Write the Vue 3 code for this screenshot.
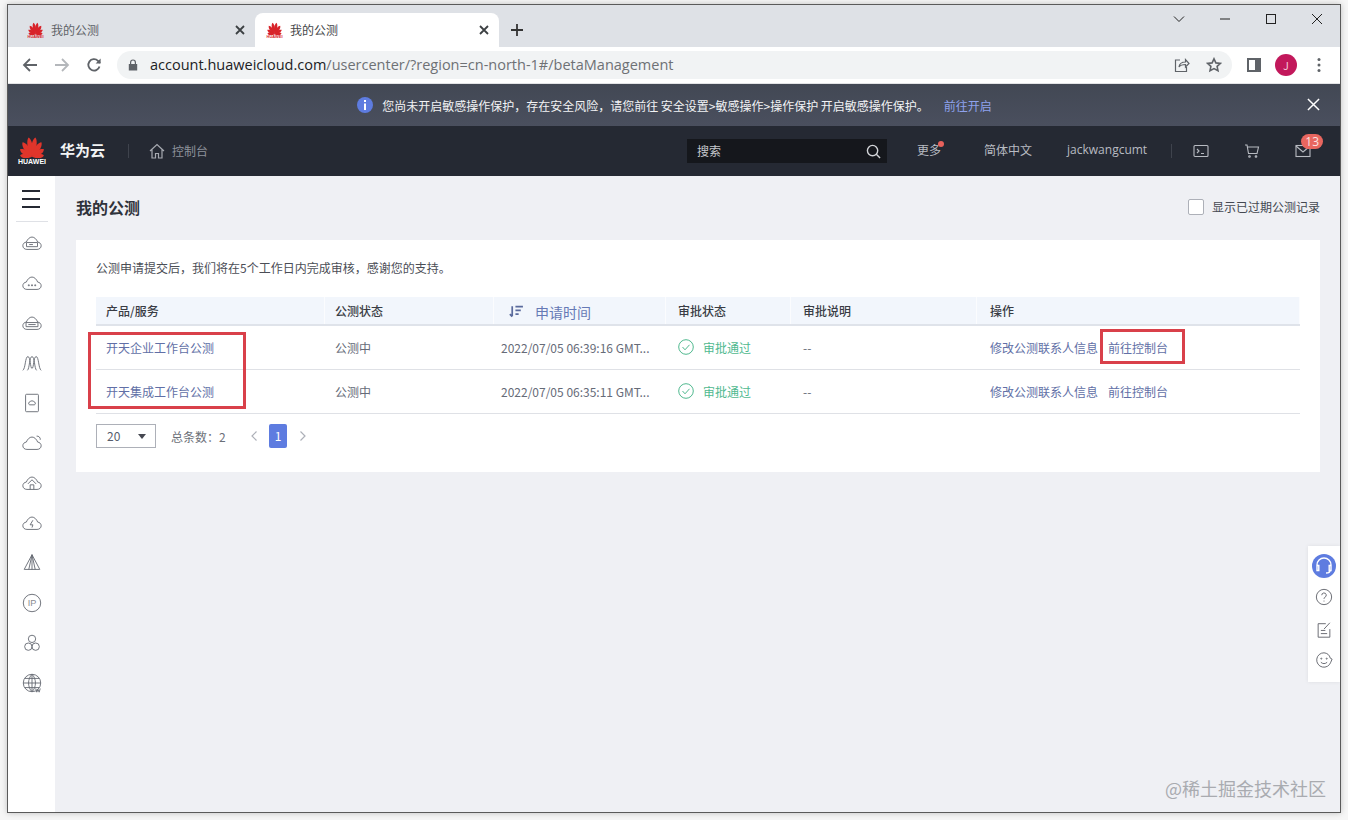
<template>
  <div class="window">
    <svg class="defs" width="0" height="0">
      <symbol id="flower" viewBox="0 0 24 20">
        <path
          v-for="p in petals"
          :key="p.a"
          :transform="`rotate(${p.a} 12 19)`"
          :d="`M12 19C${12 - p.w} ${19 - p.l * 0.55} ${12 - p.w * 0.5} ${19 - p.l * 0.9} 12 ${19 - p.l}C${12 + p.w * 0.5} ${19 - p.l * 0.9} ${12 + p.w} ${19 - p.l * 0.55} 12 19Z`"
          fill="currentColor"
        />
      </symbol>
    </svg>

    <div class="tabstrip">
      <div v-for="tab in tabs" :key="tab" class="tab" :class="tab">
        <div class="favicon">
          <svg><use href="#flower" /></svg>
          <span>HUAWEI</span>
        </div>
        <span class="tab-title">我的公测</span>
        <svg class="tab-x" viewBox="0 0 12 12"><path d="M2 2l8 8M10 2l-8 8" /></svg>
      </div>
      <svg class="new-tab" viewBox="0 0 14 14"><path d="M7 1v12M1 7h12" /></svg>
      <div class="win-ctrls">
        <svg viewBox="0 0 12 12"><path d="M1 3.500l5 5 5-5" /></svg>
        <svg viewBox="0 0 12 12"><path d="M1 6h10" /></svg>
        <svg viewBox="0 0 12 12"><rect x="1.500" y="1.500" width="9" height="9" /></svg>
        <svg viewBox="0 0 12 12"><path d="M1 1l10 10M11 1L1 11" /></svg>
      </div>
    </div>

    <div class="toolbar">
      <svg class="nav" viewBox="0 0 16 16"><path d="M15 8H2M8 2L2 8l6 6" /></svg>
      <svg class="nav dim" viewBox="0 0 16 16"><path d="M1 8h13M8 2l6 6-6 6" /></svg>
      <svg class="nav" viewBox="0 0 16 16"><path d="M13.500 9.500A5.700 5.700 0 1 1 12 3.800L14 6" /><path class="solid" d="M14.600 1.600v5h-5z" /></svg>
      <div class="omnibox">
        <svg class="lock" viewBox="0 0 10 12"><path d="M2 5V3.400a3 3 0 0 1 6 0V5h1.200v6.500H.8V5zm1.200 0h3.600V3.400a1.800 1.800 0 0 0-3.600 0z" /></svg>
        <span class="url"><b>account.huaweicloud.com</b>/usercenter/?region=cn-north-1#/betaManagement</span>
        <svg class="omni-icon share" viewBox="0 0 16 16"><path d="M6 3H1.500v11.500h11V10M5 10c.5-3.500 3-5 6.500-5V2.500L15 6.500 11.500 10V7.500C9 7.500 6.500 8 5 10z" /></svg>
        <svg class="omni-icon star" viewBox="0 0 16 16"><path d="M8 1.800l1.900 4.100 4.500.5-3.300 3 .9 4.400L8 11.600l-4 2.200.9-4.400-3.300-3 4.500-.5z" /></svg>
      </div>
      <svg class="side-panel" viewBox="0 0 14 14"><path d="M0 0h14v14H0zM2 2v10h6V2z" fill-rule="evenodd" /></svg>
      <div class="avatar">J</div>
      <svg class="dots" viewBox="0 0 4 16"><circle cx="2" cy="2.500" r="1.500" /><circle cx="2" cy="8" r="1.500" /><circle cx="2" cy="13.500" r="1.500" /></svg>
    </div>

    <div class="banner">
      <svg class="info" viewBox="0 0 16 16"><circle cx="8" cy="8" r="8" /><rect x="7" y="3" width="2" height="2" fill="#fff" /><rect x="7" y="6.500" width="2" height="6.500" fill="#fff" /></svg>
      <span>您尚未开启敏感操作保护，存在安全风险，请您前往 安全设置&gt;敏感操作&gt;操作保护 开启敏感操作保护。</span>
      <a class="banner-link">前往开启</a>
      <svg class="banner-x" viewBox="0 0 14 14"><path d="M1 1l12 12M13 1L1 13" /></svg>
    </div>

    <header class="topbar">
      <div class="logo">
        <svg class="logo-flower"><use href="#flower" /></svg>
        <span>HUAWEI</span>
      </div>
      <span class="brand">华为云</span>
      <i class="vline brand-line"></i>
      <svg class="home" viewBox="0 0 16 16"><path d="M1 8l7-6.500L15 8M3 6.500V15h3.500v-4.500h3V15H13V6.500" /></svg>
      <span class="console">控制台</span>
      <div class="search">
        <span>搜索</span>
        <svg viewBox="0 0 16 16"><circle cx="7" cy="7" r="5.500" /><path d="M11 11l4 4" /></svg>
      </div>
      <span class="top-link more">更多<i class="dot"></i></span>
      <span class="top-link lang">简体中文</span>
      <span class="top-link user">jackwangcumt</span>
      <i class="vline user-line"></i>
      <svg class="top-icon term" viewBox="0 0 16 14"><rect x="1" y="1.500" width="14" height="11" rx="1" /><path d="M4 5l2 2-2 2M8 9.500h3" /></svg>
      <svg class="top-icon cart" viewBox="0 0 16 14"><path d="M1 1h2l1.500 8.500h8.500L14.500 3H3.500" /><circle cx="5.500" cy="12.500" r=".8" /><circle cx="12" cy="12.500" r=".8" /></svg>
      <div class="mail">
        <svg class="top-icon" viewBox="0 0 16 14"><rect x="1" y="1.500" width="14" height="11" /><path d="M1 2l7 6 7-6" /></svg>
        <span class="badge">13</span>
      </div>
    </header>

    <div class="body">
      <nav class="sidebar">
        <div class="burger"><i></i><i></i><i></i></div>
        <div class="side-sep"></div>
        <div v-for="(icon, i) in sideIcons" :key="i" class="side-item">
          <svg viewBox="0 0 24 24">
            <path v-for="(d, j) in icon.paths" :key="j" :d="d" />
            <text v-if="icon.label" x="12" y="15.500" text-anchor="middle" class="ip">{{ icon.label }}</text>
          </svg>
        </div>
      </nav>

      <main class="main">
        <div class="title-row">
          <h1>我的公测</h1>
          <label class="expired"><i class="checkbox"></i>显示已过期公测记录</label>
        </div>

        <section class="card">
          <p class="note">公测申请提交后，我们将在5个工作日内完成审核，感谢您的支持。</p>

          <div class="table">
            <div class="tr thead">
              <div class="td">产品/服务</div>
              <div class="td">公测状态</div>
              <div class="td sort">
                <svg viewBox="0 0 14 12"><path d="M3 1v9.500M.8 8.500L3 10.800M6 1.500h7M6 5h5M6 8.500h3" /></svg>
                <span>申请时间</span>
              </div>
              <div class="td pad12">审批状态</div>
              <div class="td pad12">审批说明</div>
              <div class="td pad13">操作</div>
            </div>
            <div v-for="row in rows" :key="row.name" class="tr">
              <div class="td"><a>{{ row.name }}</a></div>
              <div class="td">公测中</div>
              <div class="td time">{{ row.time }}</div>
              <div class="td pad12 ok">
                <svg viewBox="0 0 16 16"><circle cx="8" cy="8" r="7.300" /><path d="M4.500 8l2.500 2.800 4.500-5" /></svg>
                审批通过
              </div>
              <div class="td pad12">--</div>
              <div class="td pad13 ops"><a>修改公测联系人信息</a><a>前往控制台</a></div>
            </div>
          </div>

          <div class="pager">
            <div class="page-size">20<i class="caret"></i></div>
            <span class="total">总条数：2</span>
            <svg class="chev" viewBox="0 0 8 12"><path d="M6.500 1.500L2 6l4.500 4.500" /></svg>
            <span class="page-num">1</span>
            <svg class="chev" viewBox="0 0 8 12"><path d="M1.500 1.500L6 6l-4.500 4.500" /></svg>
          </div>

          <div class="mark mark-names"></div>
          <div class="mark mark-op"></div>
        </section>

        <aside class="float-tools">
          <div class="agent">
            <svg viewBox="0 0 24 24"><path d="M5 14v-3a7 7 0 0 1 14 0v3M5 11.500h1.800v5H5zM17.200 11.500H19v5h-1.800zM18 16.500c0 1.800-2 2.500-4 2.500" /></svg>
          </div>
          <svg class="tool help" viewBox="0 0 20 20"><circle cx="10" cy="10" r="8.500" /><path d="M7.500 8a2.500 2.500 0 1 1 3.500 2.300c-.7.400-1 .8-1 1.700M10 14v1" /></svg>
          <svg class="tool form" viewBox="0 0 20 20"><path d="M12 3H3.500v15h13V9M10 9l6.500-7M6.500 10.500h5M6.500 14h7" /></svg>
          <svg class="tool face" viewBox="0 0 20 20"><path d="M10 2a8 8 0 1 0 7.500 10.500L19 9l-2-1A8 8 0 0 0 10 2z" /><path d="M6.500 12.500c2 2 5 2 7 0" /><circle cx="7" cy="8.500" r=".6" /><circle cx="13" cy="8.500" r=".6" /></svg>
        </aside>

        <div class="watermark">@稀土掘金技术社区</div>
      </main>
    </div>
  </div>
</template>

<script setup>
const tabs = ["idle", "active"];

const petals = [
  { a: -84, l: 11, w: 3.6 },
  { a: -58, l: 13, w: 4 },
  { a: -33, l: 16, w: 4.2 },
  { a: -10, l: 18, w: 4 },
  { a: 10, l: 18, w: 4 },
  { a: 33, l: 16, w: 4.2 },
  { a: 58, l: 13, w: 4 },
  { a: 84, l: 11, w: 3.6 },
];

const cloud =
  "M6.500 19C3.800 19 2 17.200 2 15c0-2.200 1.700-3.800 3.800-4C7 8 9.300 5.500 12 5.500S17 8 18.200 11c2.100.2 3.800 1.800 3.800 4 0 2.200-1.800 4-4.500 4z";

const sideIcons = [
  { paths: [cloud, "M6 11.500h12v4.500H6zM9 13.700h4"] },
  { paths: [cloud, "M8 14h1v1H8zM11.500 14h1v1h-1zM15 14h1v1h-1z"] },
  { paths: [cloud, "M5.500 11.500h13v4.500h-13zM8 13.700h8"] },
  { paths: ["M2 20c3-2 2.500-15 5.500-15S10 18 12 18s1.500-13 4.500-13S19 18 22 20", "M7 20c2.500-2 2-15 5-15s2.500 13 5 15"] },
  { paths: ["M6 2.500h12a1 1 0 0 1 1 1v17a1 1 0 0 1-1 1H6a1 1 0 0 1-1-1v-17a1 1 0 0 1 1-1z", "M9.500 14a1.700 1.700 0 0 1 .3-3.300c.6-1.400 3.800-1.400 4.400 0a1.700 1.700 0 0 1 .3 3.300z"] },
  { paths: [cloud, "M17 4.500a3.500 3.500 0 0 1 4 4"] },
  { paths: [cloud, "M12 8.500l-4.500 4.500M12 8.500l4.500 4.500M10 19v-5h4v5"] },
  { paths: [cloud, "M13 9l-3 5h3l-1 3"] },
  { paths: ["M12 3L3.500 19h17z", "M12 3v16M12 3l-3.500 16M12 3l3.500 16"] },
  { paths: ["M21.500 12a9.500 9.500 0 1 1-19 0 9.500 9.500 0 0 1 19 0z"], label: "IP" },
  { paths: ["M16 7.500a4 4 0 1 1-8 0 4 4 0 0 1 8 0z", "M12 16a4 4 0 1 1-8 0 4 4 0 0 1 8 0z", "M20 16a4 4 0 1 1-8 0 4 4 0 0 1 8 0z"] },
  { paths: ["M21.500 12a9.500 9.500 0 1 1-19 0 9.500 9.500 0 0 1 19 0z", "M12 2.500c-5 5-5 14 0 19M12 2.500c5 5 5 14 0 19M2.500 12h19M4 7h16M4 17h16M12 2.500v19", "M16 18l1.200 4 1.300-3 1.300 3 1.200-4"] },
];

const rows = [
  { name: "开天企业工作台公测", time: "2022/07/05 06:39:16 GMT..." },
  { name: "开天集成工作台公测", time: "2022/07/05 06:35:11 GMT..." },
];
</script>

<style>
html,
body {
  margin: 0;
  height: 820px;
  overflow: hidden;
  background: #f6f6f6;
}
</style>

<style scoped>
.window {
  box-sizing: border-box;
  width: 1334px;
  height: 809px;
  margin: 4px 0 0 7px;
  border: 1px solid #5a5a5a;
  box-shadow: 0 0 6px rgba(0, 0, 0, 0.22);
  display: flex;
  flex-direction: column;
  font-family: "Noto Sans CJK SC", "Noto Sans", sans-serif;
  font-size: 12px;
  position: relative;
  overflow: hidden;
}

.defs {
  position: absolute;
}

/* browser chrome */
.tabstrip {
  height: 42px;
  flex: none;
  background: #dee1e6;
  display: flex;
  align-items: flex-end;
}

.tab {
  width: 247px;
  height: 34px;
  box-sizing: border-box;
  padding: 0 8px 0 19px;
  display: flex;
  align-items: center;
  color: #5f6368;
  flex: none;
}

.tab.active {
  width: 244px;
  padding-left: 11px;
  background: #fff;
  border-radius: 8px 8px 0 0;
  color: #45474a;
}

.favicon {
  width: 17px;
  display: flex;
  flex-direction: column;
  align-items: center;
  color: #d8232a;
  flex: none;
  font-family: "Liberation Sans", sans-serif;
  font-size: 4px;
  font-weight: 700;
  line-height: 4px;
}

.favicon svg {
  width: 17px;
  height: 13px;
}

.tab-title {
  margin-left: 7px;
  padding-bottom: 2px;
  flex: 1;
}

.tab-x {
  width: 12px;
  height: 12px;
  margin-right: 1px;
  fill: none;
  stroke: #3c4043;
  stroke-width: 1.8;
}

.new-tab {
  width: 14px;
  height: 14px;
  margin: 0 0 10px 11px;
  fill: none;
  stroke: #333;
  stroke-width: 1.8;
}

.win-ctrls {
  margin-left: auto;
  align-self: flex-start;
  display: flex;
  gap: 34px;
  padding: 8px 17px 0 0;
}

.win-ctrls svg {
  width: 12px;
  height: 12px;
  fill: none;
  stroke: #222;
  stroke-width: 1;
}

.toolbar {
  height: 37px;
  flex: none;
  background: #fff;
  box-sizing: border-box;
  border-bottom: 1px solid #e3e4e6;
  display: flex;
  align-items: center;
  padding-left: 14px;
}

.nav {
  width: 16px;
  height: 16px;
  margin-right: 16px;
  fill: none;
  stroke: #5f6368;
  stroke-width: 1.8;
  flex: none;
}

.nav.dim {
  stroke: #b4b7bb;
}

.nav .solid {
  fill: #5f6368;
  stroke: none;
}

.omnibox {
  width: 1115px;
  height: 28px;
  margin-left: -1px;
  border-radius: 14px;
  background: #f1f3f4;
  display: flex;
  align-items: center;
  padding-left: 11px;
  box-sizing: border-box;
  flex: none;
}

.lock {
  width: 10px;
  height: 12px;
  fill: #5f6368;
  flex: none;
}

.url {
  margin-left: 12px;
  padding-bottom: 2px;
  font-family: "Open Sans", sans-serif;
  font-size: 14.5px;
  color: #6e7175;
  white-space: nowrap;
}

.url b {
  font-weight: 400;
  color: #202124;
}

.omni-icon {
  width: 16px;
  height: 16px;
  fill: none;
  stroke: #5f6368;
  stroke-width: 1.2;
  flex: none;
}

.share {
  margin-left: auto;
}

.star {
  margin: 0 10px 0 16px;
  stroke-width: 1.6;
}

.side-panel {
  width: 14px;
  height: 14px;
  margin-left: 15px;
  fill: #5f6368;
  flex: none;
}

.avatar {
  width: 22px;
  height: 22px;
  margin-left: 14px;
  border-radius: 50%;
  background: #c2185b;
  color: #f3c3d4;
  text-align: center;
  line-height: 22px;
  font-size: 11px;
  flex: none;
}

.dots {
  width: 4px;
  height: 16px;
  margin-left: 20px;
  fill: #5f6368;
  flex: none;
}

/* page */
.banner {
  height: 42px;
  flex: none;
  background: linear-gradient(#424854, #4a4f5e);
  display: flex;
  align-items: center;
  justify-content: center;
  color: #f2f3f5;
  position: relative;
}

.info {
  width: 16px;
  height: 16px;
  margin: 0 9px 0 1px;
  fill: #5e7ce0;
}

.banner-link {
  margin-left: 15px;
  color: #8ea2ee;
}

.banner-x {
  position: absolute;
  right: 20px;
  top: 14px;
  width: 13px;
  height: 13px;
  fill: none;
  stroke: #fff;
  stroke-width: 1.6;
}

.topbar {
  height: 50px;
  flex: none;
  background: #252933;
  display: flex;
  align-items: center;
  color: #b8bbc2;
}

.logo {
  width: 26px;
  margin-left: 11px;
  display: flex;
  flex-direction: column;
  align-items: center;
  color: #fff;
  font-family: "Liberation Sans", sans-serif;
  font-size: 7px;
  font-weight: 700;
  line-height: 8px;
  white-space: nowrap;
}

.logo-flower {
  width: 26px;
  height: 22px;
  color: #e0352b;
  flex: none;
}

.brand {
  margin-left: 15px;
  padding-bottom: 3px;
  font-size: 15px;
  font-weight: 700;
  color: #f3f4f5;
}

.vline {
  width: 1px;
  height: 14px;
  background: #3f434d;
  flex: none;
}

.brand-line {
  margin-left: 23px;
}

.home {
  width: 16px;
  height: 16px;
  margin-left: 20px;
  fill: none;
  stroke: #a7aab1;
  stroke-width: 1.2;
  flex: none;
}

.console {
  margin-left: 7px;
  padding-bottom: 2px;
  color: #8e929b;
}

.search {
  width: 200px;
  height: 24px;
  margin-left: 479px;
  background: #15171c;
  box-sizing: border-box;
  padding: 0 6px 0 10px;
  display: flex;
  align-items: center;
  justify-content: space-between;
  color: #c6c8cd;
  flex: none;
}

.search span {
  padding-bottom: 1px;
}

.search svg {
  width: 15px;
  height: 15px;
  fill: none;
  stroke: #d2d4d8;
  stroke-width: 1.5;
}

.top-link {
  white-space: nowrap;
  padding-bottom: 3px;
}

.more {
  margin-left: 30px;
  position: relative;
}

.dot {
  position: absolute;
  right: -3px;
  top: 0;
  width: 6px;
  height: 6px;
  border-radius: 50%;
  background: #e8615c;
}

.lang {
  margin-left: 43px;
}

.user {
  margin-left: 35px;
  font-family: "Open Sans", sans-serif;
  font-size: 12px;
}

.user-line {
  margin-left: 24px;
}

.top-icon {
  width: 16px;
  height: 14px;
  fill: none;
  stroke: #b8bbc2;
  stroke-width: 1.1;
  flex: none;
}

.term {
  margin-left: 21px;
}

.cart {
  margin-left: 35px;
}

.mail {
  margin-left: 35px;
  position: relative;
  display: flex;
}

.badge {
  position: absolute;
  left: 6px;
  top: -10px;
  min-width: 22px;
  height: 15px;
  border-radius: 8px;
  background: #e8665f;
  color: #fbe3e1;
  text-align: center;
  line-height: 15px;
  font-size: 12px;
  font-family: "Open Sans", sans-serif;
}

.body {
  flex: 1;
  min-height: 0;
  display: flex;
}

.sidebar {
  width: 47px;
  flex: none;
  background: #fff;
  display: flex;
  flex-direction: column;
  align-items: center;
}

.burger {
  height: 45px;
  margin-right: 1px;
  display: flex;
  flex-direction: column;
  justify-content: center;
  gap: 6px;
  flex: none;
}

.burger i {
  display: block;
  width: 18px;
  height: 2px;
  background: #252933;
}

.side-sep {
  width: 32px;
  height: 1px;
  background: #dfe1e6;
  flex: none;
  margin-bottom: 1px;
}

.side-item {
  height: 40px;
  margin-left: 1px;
  display: flex;
  align-items: center;
  justify-content: center;
  flex: none;
}

.side-item svg {
  width: 22px;
  height: 22px;
  fill: none;
  stroke: #666a73;
  stroke-width: 1;
}

.ip {
  font-family: "Liberation Sans", sans-serif;
  font-size: 10px;
  fill: #8a8c92;
  stroke: none;
}

.main {
  flex: 1;
  min-width: 0;
  background: #eff0f4;
  padding: 0 20px 0 21px;
  position: relative;
}

.title-row {
  height: 64px;
  display: flex;
  align-items: center;
  justify-content: space-between;
  padding-bottom: 3px;
  box-sizing: border-box;
}

h1 {
  margin: 0;
  font-size: 16px;
  font-weight: 700;
  color: #30333b;
}

.expired {
  display: flex;
  align-items: center;
  gap: 8px;
  color: #444851;
}

.checkbox {
  width: 14px;
  height: 14px;
  border: 1px solid #adb0b8;
  border-radius: 2px;
  background: #fff;
}

.card {
  height: 232px;
  box-sizing: border-box;
  background: #fff;
  padding: 20px;
  position: relative;
}

.note {
  margin: -1px 0 0;
  height: 38px;
  line-height: 17px;
  color: #4b4e56;
}

.tr {
  display: grid;
  grid-template-columns: 229px 169px 172px 125px 186px 323px;
  height: 44px;
  box-sizing: border-box;
  border-bottom: 1px solid #dfe1e6;
  align-items: center;
  color: #666b78;
}

.thead {
  height: 29px;
  background: #f2f6fc;
  border-bottom: 2px solid #dfe3ea;
  color: #393c44;
  font-weight: 500;
}

.td {
  padding-left: 10px;
  padding-bottom: 1px;
  white-space: nowrap;
  box-sizing: border-box;
}

.thead .td {
  height: 100%;
  display: flex;
  align-items: center;
  border-right: 1px solid #fbfcfe;
}

.pad12 {
  padding-left: 12px;
}

.pad13 {
  padding-left: 13px;
}

a {
  color: #616fa6;
}

.thead .sort {
  padding: 3px 0 0 15px;
  color: #6679b5;
  font-size: 14px;
  font-weight: 400;
  gap: 11px;
}

.sort svg {
  width: 15px;
  height: 13px;
  margin-top: -2px;
  fill: none;
  stroke: #5a6a9c;
  stroke-width: 1.6;
}

.time {
  padding-left: 7px;
}

.ok {
  display: flex;
  align-items: center;
  gap: 9px;
  color: #50b98f;
}

.ok svg {
  width: 16px;
  height: 16px;
  fill: none;
  stroke: #50b98f;
  stroke-width: 1;
}

.ops {
  display: flex;
  gap: 10px;
}

.pager {
  margin-top: 10px;
  height: 24px;
  display: flex;
  align-items: center;
  color: #6b6f78;
}

.page-size {
  width: 60px;
  height: 24px;
  box-sizing: border-box;
  border: 1px solid #adb0b8;
  padding-left: 10px;
  line-height: 22px;
  color: #575d6c;
  display: flex;
  align-items: center;
  justify-content: space-between;
  padding-right: 9px;
}

.caret {
  width: 0;
  height: 0;
  border-left: 4.500px solid transparent;
  border-right: 4.500px solid transparent;
  border-top: 5px solid #454851;
}

.total {
  margin-left: 15px;
  width: 79px;
}

.chev {
  width: 8px;
  height: 12px;
  fill: none;
  stroke: #adb0b8;
  stroke-width: 1.2;
}

.page-num {
  width: 18px;
  height: 24px;
  margin: 0 12px 0 11px;
  background: #5e7ce0;
  color: #fff;
  text-align: center;
  line-height: 24px;
  border-radius: 2px;
}

/* red annotation boxes drawn over the table */
.mark {
  position: absolute;
  box-sizing: border-box;
  border: 3px solid #d9404a;
}

.mark-names {
  left: 12px;
  top: 92px;
  width: 158px;
  height: 77px;
}

.mark-op {
  left: 1024px;
  top: 89px;
  width: 85px;
  height: 35px;
}

.float-tools {
  position: absolute;
  right: 0;
  top: 370px;
  width: 32px;
  height: 136px;
  box-sizing: border-box;
  padding-top: 8px;
  background: #fff;
  display: flex;
  flex-direction: column;
  align-items: center;
  box-shadow: 0 0 4px rgba(0, 0, 0, 0.08);
}

.agent {
  width: 24px;
  height: 24px;
  border-radius: 50%;
  background: #5e7ce0;
  flex: none;
}

.agent svg {
  display: block;
  fill: none;
  stroke: #fff;
  stroke-width: 1.4;
}

.tool {
  width: 18px;
  height: 18px;
  fill: none;
  stroke: #5d6068;
  stroke-width: 1;
  flex: none;
}

.help {
  margin-top: 10px;
}

.form {
  margin-top: 15px;
}

.face {
  margin-top: 12px;
}

.watermark {
  position: absolute;
  right: 14px;
  bottom: 11px;
  font-size: 18px;
  line-height: 26px;
  color: #a9abb0;
  white-space: nowrap;
}
</style>
